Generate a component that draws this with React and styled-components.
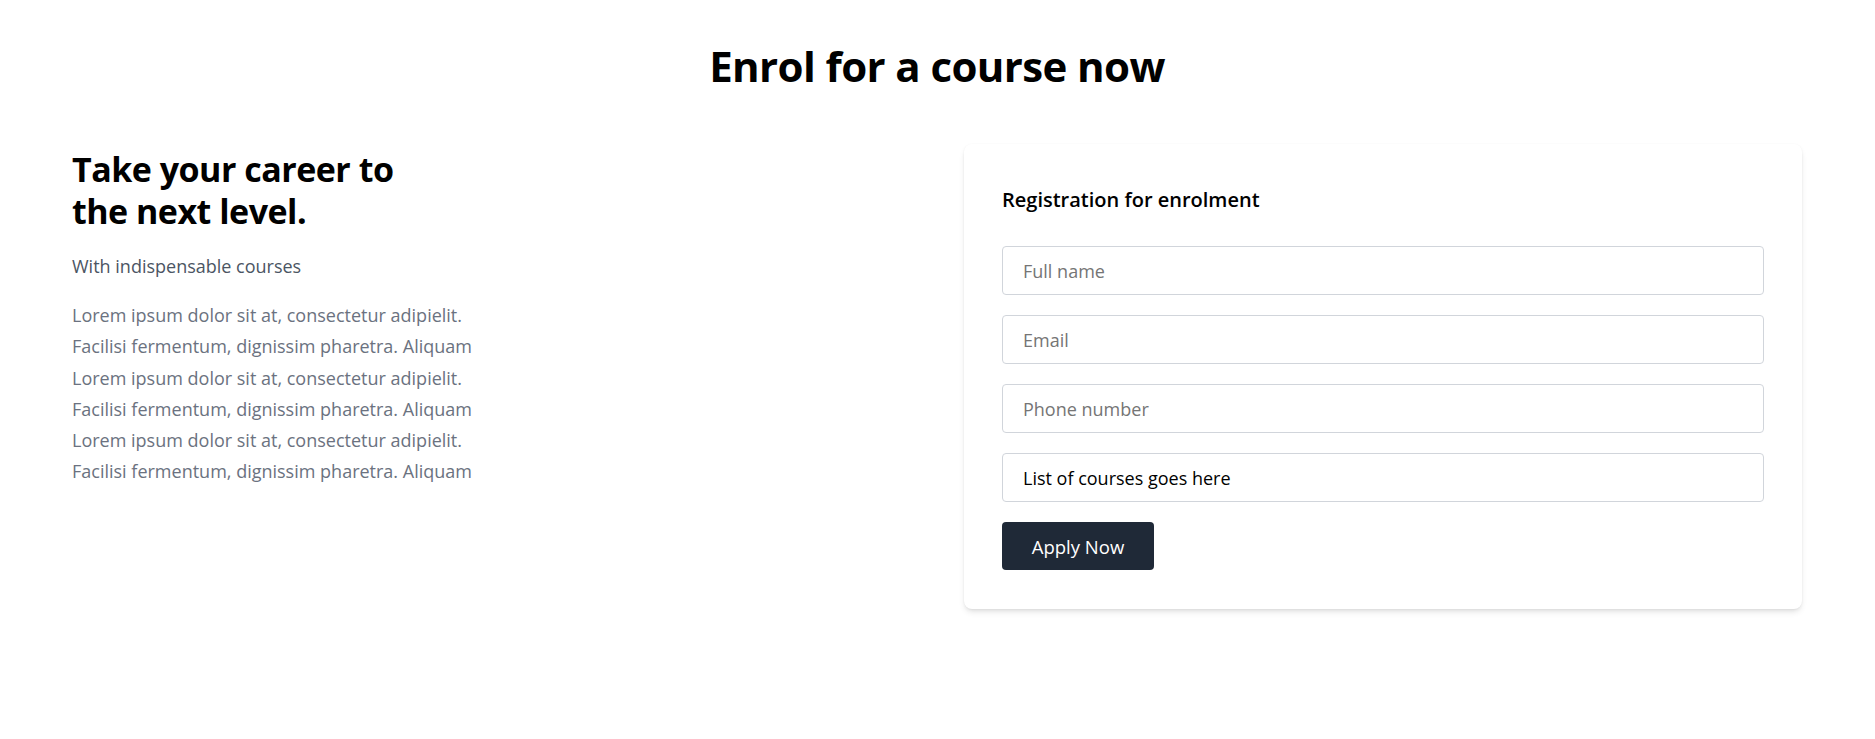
import React from "react";
import styled, { createGlobalStyle } from "styled-components";

const GlobalStyle = createGlobalStyle`
  * { box-sizing: border-box; }
  html, body { margin: 0; padding: 0; background: #ffffff; }
  body { font-family: "Open Sans", "Noto Sans", sans-serif; color: #000; }
`;

const Page = styled.main`
  padding: 38px 73px 60px 72px;
`;

const Title = styled.h1`
  margin: 0 0 50px;
  text-align: center;
  font-size: 42px;
  line-height: 56px;
  font-weight: 700;
  letter-spacing: -0.6px;
`;

const Columns = styled.div`
  display: grid;
  grid-template-columns: 1fr 838px;
  column-gap: 54px;
  align-items: start;
`;

const Intro = styled.section`
  display: flex;
  flex-direction: column;
  padding-top: 4px;
`;

const Heading = styled.h2`
  margin: 0;
  font-size: 34px;
  line-height: 42px;
  font-weight: 700;
  letter-spacing: -0.5px;
`;

const Lead = styled.p`
  margin: 20px 0 20px;
  font-size: 18px;
  line-height: 28px;
  color: #4b5563;
`;

const Body = styled.p`
  margin: 0;
  font-size: 18px;
  line-height: 31.3px;
  color: #6b7280;
`;

const Line = styled.span`
  display: block;
  white-space: nowrap;
`;

const Card = styled.form`
  background: #fff;
  border-radius: 8px;
  box-shadow: 0 4px 6px -1px rgba(0, 0, 0, 0.1), 0 2px 4px -2px rgba(0, 0, 0, 0.1), 0 0 2px rgba(0,0,0,0.04);
  padding: 42px 38px 39px;
  display: flex;
  flex-direction: column;
  gap: 20px;
`;

const CardTitle = styled.h3`
  margin: 0 0 12px;
  font-size: 20px;
  line-height: 28px;
  font-weight: 600;
`;

const Field = styled.input`
  display: block;
  width: 100%;
  height: 49px;
  padding: 0 20px;
  border: 1px solid #d1d5db;
  border-radius: 4px;
  font-family: inherit;
  font-size: 18px;
  color: #000;
  background: #fff;
  outline: none;
  &::placeholder { color: #757575; }
`;

const Select = styled.select`
  display: block;
  width: 100%;
  height: 49px;
  padding: 0 20px;
  border: 1px solid #d1d5db;
  border-radius: 4px;
  font-family: inherit;
  font-size: 18px;
  color: #000;
  background: #fff;
  appearance: none;
  -webkit-appearance: none;
  outline: none;
`;

const Button = styled.button`
  align-self: flex-start;
  width: 152px;
  height: 48px;
  border: none;
  border-radius: 4px;
  background: #1f2937;
  color: #fff;
  font-family: inherit;
  font-size: 18.5px;
  cursor: pointer;
`;

const lorem = [
  "Lorem ipsum dolor sit at, consectetur adipielit.",
  "Facilisi fermentum, dignissim pharetra. Aliquam",
  "Lorem ipsum dolor sit at, consectetur adipielit.",
  "Facilisi fermentum, dignissim pharetra. Aliquam",
  "Lorem ipsum dolor sit at, consectetur adipielit.",
  "Facilisi fermentum, dignissim pharetra. Aliquam",
];

export default function App() {
  return (
    <>
      <GlobalStyle />
      <Page>
        <Title>Enrol for a course now</Title>
        <Columns>
          <Intro>
            <Heading>
              Take your career to
              <br />
              the next level.
            </Heading>
            <Lead>With indispensable courses</Lead>
            <Body>
              {lorem.map((t, i) => (
                <Line key={i}>{t}</Line>
              ))}
            </Body>
          </Intro>
          <Card onSubmit={(e) => e.preventDefault()}>
            <CardTitle>Registration for enrolment</CardTitle>
            <Field type="text" placeholder="Full name" />
            <Field type="email" placeholder="Email" />
            <Field type="tel" placeholder="Phone number" />
            <Select defaultValue="">
              <option value="">List of courses goes here</option>
            </Select>
            <Button type="submit">Apply Now</Button>
          </Card>
        </Columns>
      </Page>
    </>
  );
}
